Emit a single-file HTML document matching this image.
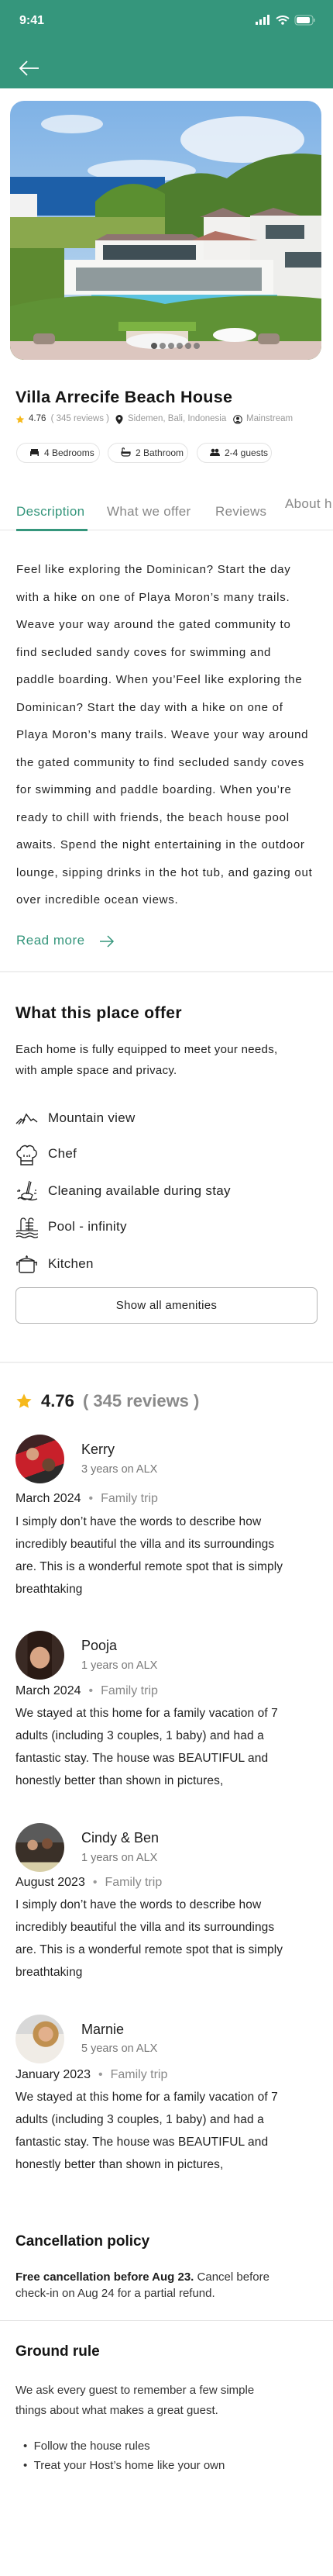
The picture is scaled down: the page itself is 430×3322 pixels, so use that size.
<!DOCTYPE html>
<html><head><meta charset="utf-8">
<style>
*{margin:0;padding:0;box-sizing:border-box}
body{width:430px;height:3322px;position:relative;background:#fff;font-family:"Liberation Sans",sans-serif;color:#1e1e1e;overflow:hidden}
.a{position:absolute;white-space:nowrap}
.hdr{position:absolute;left:0;top:0;width:430px;height:114px;background:#35967c}
.desc{position:absolute;left:21px;top:717px;font-size:15px;line-height:35.5px;letter-spacing:0.75px;color:#222}
.rev{position:absolute;left:20px;font-size:15.5px;line-height:29px;color:#222;letter-spacing:0.1px}
.name{position:absolute;left:105px;font-size:18px;color:#1e1e1e}
.sub{position:absolute;left:105px;font-size:14.5px;color:#777}
.date{position:absolute;left:20px;font-size:16px;color:#1e1e1e}
.date span{color:#888}
.date i{font-style:normal;color:#999;margin:0 10px}
.av{position:absolute;left:20px;width:63px;height:63px;border-radius:50%;overflow:hidden}
.chip{position:absolute;top:571px;height:26px;border:1px solid #e3e3e3;border-radius:13px;font-size:12px;line-height:24px;color:#333;padding-left:16px}
.chip svg{vertical-align:middle;margin-right:6px;margin-top:-3px}
.am{position:absolute;left:62px;font-size:17px;color:#222;letter-spacing:0.3px}
.ic{position:absolute;left:20px}
.div{position:absolute;left:0;width:430px;height:2px;background:#efefef}
</style></head><body>
<div class="hdr"></div>
<div class="a" style="left:25px;top:18px;color:#fff;font-weight:bold;font-size:16px">9:41</div>
<svg class="a" style="left:329px;top:19px" width="80" height="16" viewBox="0 0 80 16">
<rect x="1" y="9" width="3" height="4" fill="#fff"/><rect x="6" y="6" width="3" height="7" fill="#fff"/><rect x="11" y="3" width="3" height="10" fill="#fff"/><rect x="16" y="0" width="3" height="13" fill="#fff"/>
<path d="M28 5 Q36 -1 44 5" stroke="#fff" stroke-width="2" fill="none"/><path d="M31 8 Q36 4 41 8" stroke="#fff" stroke-width="2" fill="none"/><circle cx="36" cy="11" r="1.8" fill="#fff"/>
<rect x="52" y="1" width="23" height="12" rx="3.5" stroke="#9fd0c0" stroke-width="1" fill="none"/><rect x="54" y="3" width="17" height="8" rx="2" fill="#fff"/><rect x="76" y="5" width="1.5" height="4" fill="#9fd0c0"/>
</svg>
<svg class="a" style="left:24px;top:78px" width="27" height="20" viewBox="0 0 27 20"><path d="M26 10H2M11 1L2 10l9 9" stroke="#fff" stroke-width="1.8" fill="none"/></svg>

<svg class="a" style="left:13px;top:130px" width="402" height="334" viewBox="0 0 402 334">
<defs><clipPath id="c"><rect width="402" height="334" rx="18"/></clipPath>
<linearGradient id="sk" x1="0" y1="0" x2="0" y2="1"><stop offset="0" stop-color="#7fb2e6"/><stop offset="1" stop-color="#c4dcef"/></linearGradient></defs>
<g clip-path="url(#c)">
<rect width="402" height="334" fill="url(#sk)"/>
<ellipse cx="80" cy="30" rx="40" ry="12" fill="#eef4fa" opacity=".8"/>
<ellipse cx="300" cy="50" rx="80" ry="30" fill="#f2f6fa" opacity=".85"/>
<ellipse cx="170" cy="90" rx="70" ry="14" fill="#eef4fa" opacity=".8"/>
<rect x="0" y="98" width="200" height="50" fill="#1d5fa8"/>
<path d="M180 120 Q230 80 280 100 Q330 60 402 70 L402 200 L180 200Z" fill="#4f7e2e"/>
<path d="M110 130 Q150 90 200 120 L200 180 L110 180Z" fill="#5b8f30"/>
<rect x="0" y="120" width="35" height="30" fill="#f2f2f2"/>
<rect x="0" y="150" width="200" height="40" fill="#8aa84d"/>
<path d="M110 180 L125 172 L235 172 L250 180Z" fill="#8e7570"/>
<rect x="110" y="180" width="140" height="40" fill="#f4f4f2"/>
<rect x="120" y="186" width="120" height="20" fill="#3f4e55"/>
<path d="M245 150 L275 138 L305 150Z" fill="#8e7570"/><rect x="250" y="150" width="60" height="60" fill="#f2f1ef"/>
<path d="M310 148 L340 138 L375 148Z" fill="#8e7570"/><rect x="310" y="148" width="92" height="110" fill="#eeeeec"/>
<rect x="330" y="160" width="50" height="18" fill="#4a5a60"/><rect x="355" y="195" width="47" height="20" fill="#4a5a60"/>
<path d="M235 180 L265 168 L320 180Z" fill="#b27366"/>
<rect x="70" y="205" width="270" height="45" fill="#f7f7f5"/>
<rect x="85" y="215" width="240" height="30" fill="#8f9a9c"/>
<rect x="105" y="250" width="240" height="18" fill="#5bc3e0"/>
<rect x="0" y="190" width="70" height="144" fill="#5d8a30"/>
<path d="M0 265 Q100 240 200 262 Q300 245 402 255 L402 334 L0 334Z" fill="#5f9235"/>
<rect x="140" y="285" width="100" height="12" fill="#7cb342"/>
<rect x="150" y="297" width="80" height="28" fill="#e7dccf"/>
<rect x="0" y="310" width="402" height="24" fill="#dcc6bf"/>
<ellipse cx="290" cy="302" rx="28" ry="9" fill="#fafafa"/>
<ellipse cx="190" cy="310" rx="40" ry="10" fill="#f5f5f5"/>
<rect x="30" y="300" width="28" height="14" rx="5" fill="#9b8a7e"/><rect x="320" y="300" width="28" height="14" rx="5" fill="#9b8a7e"/>
<g fill="#3a3a3a" opacity=".85"><circle cx="186" cy="316" r="4"/></g>
<g fill="#6a6a6a" opacity=".75"><circle cx="197" cy="316" r="4"/><circle cx="208" cy="316" r="4"/><circle cx="219" cy="316" r="4"/><circle cx="230" cy="316" r="4"/><circle cx="241" cy="316" r="4"/></g>
</g></svg>

<div class="a" style="left:20px;top:500px;font-size:21.5px;font-weight:bold;color:#151515;letter-spacing:0.3px">Villa Arrecife Beach House</div>
<svg class="a" style="left:20px;top:535px" width="12" height="12" viewBox="0 0 24 24"><path d="M12 1.5l3.2 6.9 7.3.8-5.5 5 1.6 7.3L12 17.8l-6.6 3.7L7 14.2l-5.5-5 7.3-.8z" fill="#f6b91c"/></svg>
<div class="a" style="left:37px;top:534px;font-size:11.5px;color:#333">4.76 <span style="color:#999;margin-left:3px">( 345 reviews )</span></div>
<svg class="a" style="left:149px;top:535px" width="10" height="12" viewBox="0 0 10 12"><path d="M5 0a4.5 4.5 0 0 0-4.5 4.5C.5 8 5 12 5 12s4.5-4 4.5-7.5A4.5 4.5 0 0 0 5 0z" fill="#222"/><circle cx="5" cy="4.5" r="1.6" fill="#fff"/></svg>
<div class="a" style="left:165px;top:534px;font-size:11.5px;color:#999">Sidemen, Bali, Indonesia</div>
<svg class="a" style="left:301px;top:535px" width="12" height="12" viewBox="0 0 12 12"><circle cx="6" cy="6" r="5.3" stroke="#222" fill="none"/><circle cx="6" cy="4.6" r="2" fill="#222"/><path d="M2.5 10 Q6 5.8 9.5 10" fill="#222"/></svg>
<div class="a" style="left:318px;top:534px;font-size:11.5px;color:#999">Mainstream</div>

<div class="chip" style="left:21px;width:108px"><svg width="13" height="10" viewBox="0 0 13 10"><path d="M1 4h11v6h-1.5V8h-8v2H1z M2 1h9v3H2z" fill="#222"/></svg>4 Bedrooms</div>
<div class="chip" style="left:139px;width:104px"><svg width="13" height="13" viewBox="0 0 13 13"><path d="M1 6h11v2c0 2-1.5 3-3 3H4c-1.5 0-3-1-3-3z M2 6V2a1.2 1.2 0 0 1 2.4 0v.5" stroke="#222" stroke-width="1.2" fill="none"/><rect x="1" y="6" width="11" height="2" fill="#222"/></svg>2 Bathroom</div>
<div class="chip" style="left:254px;width:97px"><svg width="13" height="11" viewBox="0 0 13 11"><circle cx="4" cy="3" r="2.3" fill="#222"/><circle cx="9" cy="3" r="2.3" fill="#222"/><path d="M0 10c0-3 2-4.5 4-4.5s4 1.5 4 4.5z M5 10c0-3 2-4.5 4-4.5s4 1.5 4 4.5z" fill="#222"/></svg>2-4 guests</div>

<div class="a" style="left:21px;top:650px;font-size:17px;color:#35967c;letter-spacing:0.3px">Description</div>
<div class="a" style="left:138px;top:650px;font-size:17px;color:#888;letter-spacing:0.3px">What we offer</div>
<div class="a" style="left:278px;top:650px;font-size:17px;color:#888;letter-spacing:0.3px">Reviews</div>
<div class="a" style="left:368px;top:640px;font-size:17px;color:#888;letter-spacing:0.3px">About h</div>
<div class="a" style="left:0;top:683px;width:430px;height:1px;background:#e4e4e4"></div>
<div class="a" style="left:21px;top:682px;width:92px;height:3px;background:#35967c"></div>

<div class="desc">Feel like exploring the Dominican? Start the day<br>with a hike on one of Playa Moron’s many trails.<br>Weave your way around the gated community to<br>find secluded sandy coves for swimming and<br>paddle boarding. When you’Feel like exploring the<br>Dominican? Start the day with a hike on one of<br>Playa Moron’s many trails. Weave your way around<br>the gated community to find secluded sandy coves<br>for swimming and paddle boarding. When you’re<br>ready to chill with friends, the beach house pool<br>awaits. Spend the night entertaining in the outdoor<br>lounge, sipping drinks in the hot tub, and gazing out<br>over incredible ocean views.</div>
<div class="a" style="left:21px;top:1203px;font-size:17px;color:#35967c;letter-spacing:0.5px">Read more</div>
<svg class="a" style="left:128px;top:1206px" width="20" height="16" viewBox="0 0 20 16"><path d="M1 8h17M11 1l7 7-7 7" stroke="#35967c" stroke-width="1.5" fill="none"/></svg>
<div class="div" style="top:1252px"></div>

<div class="a" style="left:20px;top:1295px;font-size:21px;font-weight:bold;color:#151515;letter-spacing:0.4px">What this place offer</div>
<div class="a" style="left:20px;top:1340px;font-size:15px;line-height:27px;color:#222;letter-spacing:0.3px">Each home is fully equipped to meet your needs,<br>with ample space and privacy.</div>

<svg class="ic" style="top:1433px" width="29" height="18" viewBox="0 0 29 18"><path d="M1 16 L7 10 L10 12 L14 4 L20 12 L23 10 L28 14 M4 17 L8 12 M9 16 L12 10" stroke="#222" stroke-width="1.4" fill="none"/></svg>
<div class="am" style="top:1432px">Mountain view</div>
<svg class="ic" style="top:1475px" width="29" height="29" viewBox="0 0 29 29"><path d="M7 18 C1 17 0 9 6 8 C7 3 13 1 15 4 C18 1 24 3 24 8 C29 9 28 17 22 18 V27 H7Z M7 22h15 M11 14v3 M15 15v2 M18 14v3" stroke="#222" stroke-width="1.4" fill="none"/></svg>
<div class="am" style="top:1478px">Chef</div>
<svg class="ic" style="top:1522px" width="29" height="28" viewBox="0 0 29 28"><path d="M18 1 L14 18 M20 2 L16 18 M8 19 Q14 14 22 19 L20 24 Q12 25 8 22 Z M3 24 Q6 21 9 24 Q12 26 15 24 Q20 27 28 24 M4 12l2 2M2 14h4M25 13h2M24 17h3" stroke="#222" stroke-width="1.3" fill="none"/></svg>
<div class="am" style="top:1526px">Cleaning available during stay</div>
<svg class="ic" style="top:1569px" width="29" height="29" viewBox="0 0 29 29"><path d="M7 18V5a3 3 0 0 1 6 0 M17 18V5a3 3 0 0 1 6 0 M13 8h10 M13 12h10 M13 16h10 M1 18h28 M1 22q3.5-2 7 0t7 0 7 0 7 0 M1 26q3.5-2 7 0t7 0 7 0 7 0" stroke="#222" stroke-width="1.3" fill="none"/></svg>
<div class="am" style="top:1572px">Pool - infinity</div>
<svg class="ic" style="top:1617px" width="29" height="26" viewBox="0 0 29 26"><path d="M5 9h19v13a2 2 0 0 1-2 2H7a2 2 0 0 1-2-2z M1 11h4 M24 11h4 M5 9 Q14 3 24 9 M13 4h3 M14.5 2v2 M2 11v4 M27 11v4" stroke="#222" stroke-width="1.4" fill="none"/></svg>
<div class="am" style="top:1620px">Kitchen</div>

<div class="a" style="left:20px;top:1660px;width:390px;height:47px;border:1px solid #b5b5b5;border-radius:7px;text-align:center;line-height:45px;font-size:15px;color:#222;letter-spacing:0.3px">Show all amenities</div>
<div class="div" style="top:1756px"></div>

<svg class="a" style="left:20px;top:1796px" width="22" height="22" viewBox="0 0 24 24"><path d="M12 1.5l3.2 6.9 7.3.8-5.5 5 1.6 7.3L12 17.8l-6.6 3.7L7 14.2l-5.5-5 7.3-.8z" fill="#f6b91c"/></svg>
<div class="a" style="left:53px;top:1794px;font-size:22px;font-weight:bold;color:#1e1e1e">4.76 <span style="color:#8a8a8a;margin-left:5px">( 345 reviews )</span></div>

<div class="av" style="top:1850px;background:radial-gradient(circle at 35% 40%,#d6a07f 0 14%,transparent 15%),radial-gradient(circle at 68% 62%,#6b4530 0 14%,transparent 15%),linear-gradient(160deg,#402324 0 30%,#c8202a 30% 70%,#2a2a2a 70%)"></div>
<div class="name" style="top:1859px">Kerry</div>
<div class="sub" style="top:1887px">3 years on ALX</div>
<div class="date" style="top:1924px">March 2024<i>•</i><span>Family trip</span></div>
<div class="rev" style="top:1948px">I simply don’t have the words to describe how<br>incredibly beautiful the villa and its surroundings<br>are. This is a wonderful remote spot that is simply<br>breathtaking</div>

<div class="av" style="top:2103px;background:radial-gradient(ellipse at 50% 55%,#d8a585 0 28%,transparent 29%),linear-gradient(90deg,#3a2a24 0 25%,#2a1a14 25% 75%,#3a2a24 75%)"></div>
<div class="name" style="top:2112px">Pooja</div>
<div class="sub" style="top:2140px">1 years on ALX</div>
<div class="date" style="top:2172px">March 2024<i>•</i><span>Family trip</span></div>
<div class="rev" style="top:2195px">We stayed at this home for a family vacation of 7<br>adults (including 3 couples, 1 baby) and had a<br>fantastic stay. The house was BEAUTIFUL and<br>honestly better than shown in pictures,</div>

<div class="av" style="top:2351px;background:radial-gradient(circle at 35% 45%,#c99a7a 0 12%,transparent 13%),radial-gradient(circle at 65% 42%,#7a5038 0 12%,transparent 13%),linear-gradient(180deg,#5a5a5a 0 40%,#3a3028 40% 80%,#d8cfa8 80%)"></div>
<div class="name" style="top:2360px">Cindy &amp; Ben</div>
<div class="sub" style="top:2388px">1 years on ALX</div>
<div class="date" style="top:2419px">August 2023<i>•</i><span>Family trip</span></div>
<div class="rev" style="top:2442px">I simply don’t have the words to describe how<br>incredibly beautiful the villa and its surroundings<br>are. This is a wonderful remote spot that is simply<br>breathtaking</div>

<div class="av" style="top:2598px;background:radial-gradient(circle at 62% 40%,#e2b08c 0 17%,transparent 18%),radial-gradient(circle at 62% 40%,#c09050 0 30%,transparent 31%),linear-gradient(180deg,#d8d8d8 0 40%,#f0ece6 40%)"></div>
<div class="name" style="top:2607px">Marnie</div>
<div class="sub" style="top:2634px">5 years on ALX</div>
<div class="date" style="top:2667px">January 2023<i>•</i><span>Family trip</span></div>
<div class="rev" style="top:2690px">We stayed at this home for a family vacation of 7<br>adults (including 3 couples, 1 baby) and had a<br>fantastic stay. The house was BEAUTIFUL and<br>honestly better than shown in pictures,</div>

<div class="a" style="left:20px;top:2880px;font-size:19px;font-weight:bold;color:#151515">Cancellation policy</div>
<div class="a" style="left:20px;top:2926px;font-size:15px;line-height:21px;color:#333"><b style="color:#1e1e1e">Free cancellation before Aug 23.</b> Cancel before<br>check-in on Aug 24 for a partial refund.</div>
<div class="a" style="left:0;top:2992px;width:430px;height:1px;background:#e6e6e6"></div>
<div class="a" style="left:20px;top:3022px;font-size:19px;font-weight:bold;color:#151515">Ground rule</div>
<div class="a" style="left:20px;top:3070px;font-size:15px;line-height:26px;color:#333">We ask every guest to remember a few simple<br>things about what makes a great guest.</div>
<div class="a" style="left:30px;top:3142px;font-size:15px;line-height:25px;color:#333">•&nbsp;&nbsp;Follow the house rules<br>•&nbsp;&nbsp;Treat your Host’s home like your own</div>
</body></html>
